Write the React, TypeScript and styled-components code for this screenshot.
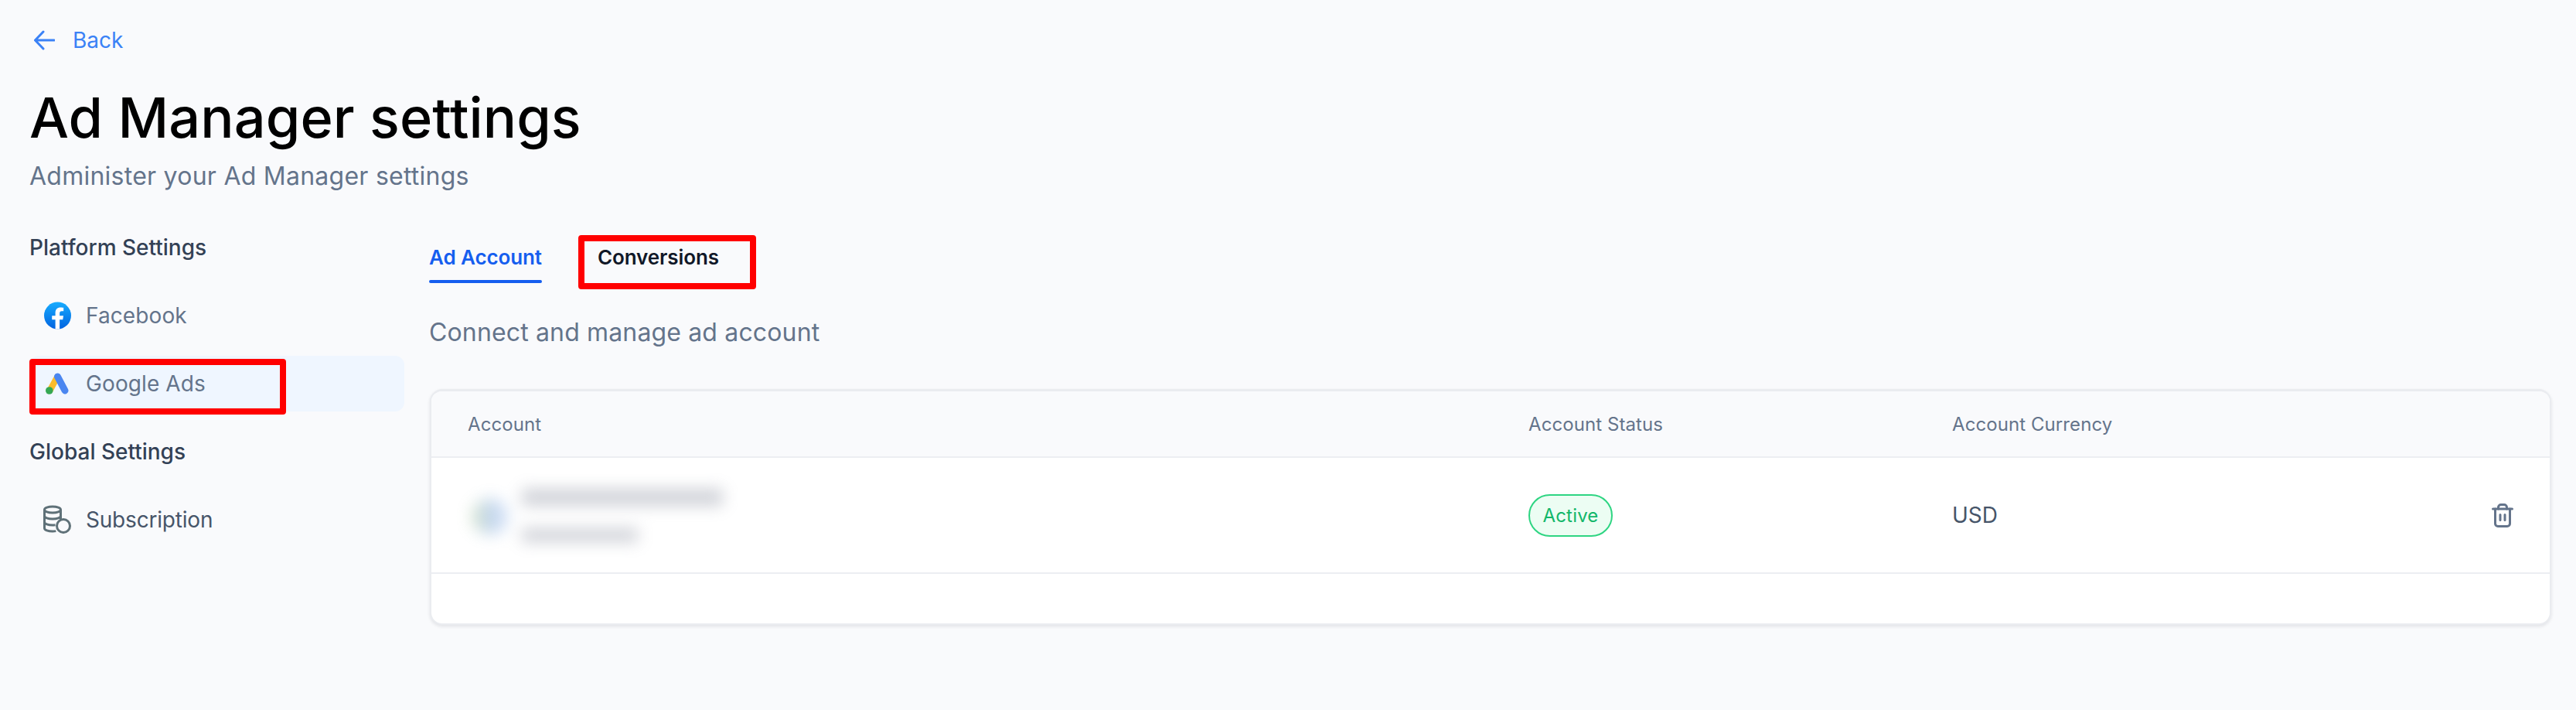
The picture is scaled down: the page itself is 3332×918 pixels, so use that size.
import React from 'react';
import styled, { createGlobalStyle } from 'styled-components';

const GlobalStyle = createGlobalStyle`
  html, body {
    margin: 0;
    padding: 0;
    background: #f9fafc;
    font-family: Inter, "Liberation Sans", sans-serif;
  }
  * {
    box-sizing: border-box;
  }
`;

const Page = styled.div`
  min-height: 918px;
  padding: 32px 32px 0 38px;
  background: #f9fafc;
`;

const BackLink = styled.a`
  display: flex;
  align-items: center;
  gap: 23px;
  height: 40px;
  padding-left: 6px;
  font-size: 28px;
  line-height: 40px;
  color: #3b82f6;
`;

const Title = styled.h1`
  margin: 36px 0 10px;
  font-size: 72px;
  line-height: 88px;
  font-weight: 500;
  letter-spacing: 0.1px;
  color: #000;
`;

const Subtitle = styled.p`
  margin: 0 0 50px;
  font-size: 32px;
  line-height: 44px;
  letter-spacing: 0.25px;
  color: #64748b;
`;

const Columns = styled.div`
  display: flex;
  gap: 32px;
`;

const Sidebar = styled.nav`
  flex: 0 0 485px;
  display: flex;
  flex-direction: column;
`;

const SectionLabel = styled.div<{ $spaced?: boolean }>`
  margin: ${p => (p.$spaced ? '32px' : '0')} 0 32px;
  font-size: 28px;
  line-height: 40px;
  font-weight: 500;
  color: #334155;
`;

const NavList = styled.div`
  display: flex;
  flex-direction: column;
  gap: 16px;
`;

const NavItem = styled.div<{ $active?: boolean; $dark?: boolean }>`
  position: relative;
  display: flex;
  align-items: center;
  height: 72px;
  padding-left: 16px;
  border-radius: 12px;
  font-size: 28px;
  font-weight: 400;
  letter-spacing: ${p => (p.$dark ? '-0.2px' : '0.1px')};
  color: ${p => (p.$dark ? '#475569' : '#64748b')};
  background: ${p => (p.$active ? '#eff6ff' : 'transparent')};
`;

const NavIcon = styled.span`
  flex: 0 0 40px;
  display: flex;
  align-items: center;
  justify-content: center;
  margin-right: 17px;
`;

const Marker = styled.div<{ $left: number; $top: number; $width: number; $height: number }>`
  position: absolute;
  left: ${p => p.$left}px;
  top: ${p => p.$top}px;
  width: ${p => p.$width}px;
  height: ${p => p.$height}px;
  border: 8px solid #ff0000;
  border-radius: 4px;
  pointer-events: none;
`;

const Main = styled.main`
  flex: 1;
  min-width: 0;
`;

const Tabs = styled.div`
  display: flex;
  gap: 72px;
  padding-top: 13px;
`;

const Tab = styled.div<{ $active?: boolean }>`
  position: relative;
  height: 53px;
  font-size: 26px;
  line-height: 40px;
  font-weight: 600;
  letter-spacing: -0.1px;
  color: ${p => (p.$active ? '#155eef' : '#101828')};

  &::after {
    content: '';
    display: ${p => (p.$active ? 'block' : 'none')};
    position: absolute;
    left: 0;
    right: 0;
    bottom: 0;
    height: 4px;
    border-radius: 2px;
    background: #155eef;
  }
`;

const Description = styled.p`
  margin: 42px 0 51px;
  font-size: 32px;
  line-height: 44px;
  letter-spacing: 0.15px;
  color: #64748b;
`;

const Card = styled.section`
  margin-left: 1px;
  border: 2px solid #eaecf0;
  border-top-width: 3px;
  border-radius: 16px;
  background: #fff;
  overflow: hidden;
  box-shadow: 0 2px 4px rgba(16, 24, 40, 0.1);
`;

const Row = styled.div`
  display: grid;
  grid-template-columns: 1372px 548px 1fr 100px;
  align-items: center;
  padding-left: 47px;
`;

const HeadRow = styled(Row)`
  height: 86px;
  background: #f9fafc;
  border-bottom: 2px solid #eceef2;
  font-size: 24px;
  letter-spacing: 0.08px;
  color: #64748b;
`;

const BodyRow = styled(Row)`
  height: 150px;
  border-bottom: 2px solid #eceef2;
  font-size: 28px;
  color: #475569;
`;

const EmptyRow = styled.div`
  height: 64px;
`;

const AccountCell = styled.div`
  display: flex;
  align-items: center;
  gap: 17px;
  padding-left: 5px;
  filter: blur(10px);
  opacity: 0.42;
`;

const AccountAvatar = styled.div`
  width: 48px;
  height: 46px;
  margin-top: 4px;
  border-radius: 50%;
  background: linear-gradient(90deg, #9cc07a 0%, #6f9cdc 55%, #a9c4ec 100%);
`;

const AccountLines = styled.div`
  display: flex;
  flex-direction: column;
  gap: 29px;
`;

const BlurLine = styled.div<{ $width: number; $height: number }>`
  width: ${p => p.$width}px;
  height: ${p => p.$height}px;
  background: #8f94a3;
`;

const StatusBadge = styled.span`
  display: inline-flex;
  align-items: center;
  justify-content: center;
  width: 109px;
  height: 55px;
  border: 2px solid #2ed582;
  border-radius: 28px;
  background: #ecfdf3;
  font-size: 24px;
  font-weight: 400;
  letter-spacing: 0.2px;
  color: #12b76a;
`;

const DeleteCell = styled.div`
  display: flex;
  justify-content: flex-start;
  padding-left: 25px;
  color: #64748b;
`;

const FacebookIcon = () => (
  <svg width="35" height="36" viewBox="0 0 40 40">
    <defs>
      <linearGradient id="fbGradient" x1="0" y1="0" x2="0" y2="1">
        <stop offset="0" stopColor="#18acfe" />
        <stop offset="1" stopColor="#0163e0" />
      </linearGradient>
    </defs>
    <circle cx="20" cy="20" r="20" fill="url(#fbGradient)" />
    <path
      fill="#fff"
      d="M16.7 40V26h-5v-5.8h5v-4.4c0-5 3-7.8 7.6-7.8 2.2 0 4.5.4 4.5.4v4.9h-2.5c-2.5 0-3.3 1.5-3.3 3.1v3.8h5.6l-.9 5.800h-4.700v14z"
    />
  </svg>
);

const GoogleAdsIcon = () => (
  <svg width="30" height="28" viewBox="0 0 30 28">
    <line x1="15" y1="5.5" x2="6" y2="22" stroke="#fbbc2c" strokeWidth="8" strokeLinecap="round" />
    <line x1="15.5" y1="5" x2="25" y2="23" stroke="#4a86f0" strokeWidth="9" strokeLinecap="round" />
    <circle cx="4.8" cy="23" r="4.8" fill="#34a853" />
  </svg>
);

const SubscriptionIcon = () => (
  <svg width="38" height="38" viewBox="0 0 38 38" fill="none" stroke="#5f7178" strokeWidth="3">
    <ellipse cx="13" cy="6" rx="10.5" ry="4" />
    <path d="M2.5 6v24c0 2.2 4.7 4 10.5 4 1.6 0 3-.1 4.3-.4" />
    <path d="M23.5 6v14" />
    <path d="M2.5 14c0 2.2 4.7 4 10.5 4s10.5-1.8 10.5-4" />
    <path d="M2.5 22c0 2.2 4.7 4 10.5 4 1.2 0 2.4-.1 3.5-.2" />
    <circle cx="27" cy="27" r="8.5" />
  </svg>
);

const BackArrow = () => (
  <svg width="27" height="26" viewBox="0 0 27 26" fill="none" stroke="currentColor" strokeWidth="3" strokeLinecap="round" strokeLinejoin="round">
    <path d="M26 13H2M12 2 1.500 13 12 24" />
  </svg>
);

const TrashIcon = () => (
  <svg width="28" height="31" viewBox="0 0 28 31" fill="none" stroke="currentColor" strokeWidth="3" strokeLinecap="round" strokeLinejoin="round">
    <path d="M1.500 7h25" />
    <path d="M8.500 7V5A3.500 3.500 0 0 1 12 1.500h4A3.500 3.500 0 0 1 19.500 5v2" />
    <path d="M4.500 7v19A3.500 3.500 0 0 0 8 29.500h12a3.500 3.500 0 0 0 3.500-3.500V7" />
    <path d="M11 14.500v7M17 14.500v7" />
  </svg>
);

export default function App() {
  return (
    <>
      <GlobalStyle />
      <Page>
        <BackLink>
          <BackArrow />
          Back
        </BackLink>
        <Title>Ad Manager settings</Title>
        <Subtitle>Administer your Ad Manager settings</Subtitle>
        <Columns>
          <Sidebar>
            <SectionLabel>Platform Settings</SectionLabel>
            <NavList>
              <NavItem>
                <NavIcon><FacebookIcon /></NavIcon>
                Facebook
              </NavItem>
              <NavItem $active>
                <NavIcon><GoogleAdsIcon /></NavIcon>
                Google Ads
                <Marker $left={0} $top={4} $width={332} $height={72} />
              </NavItem>
            </NavList>
            <SectionLabel $spaced>Global Settings</SectionLabel>
            <NavList>
              <NavItem $dark>
                <NavIcon><SubscriptionIcon /></NavIcon>
                Subscription
              </NavItem>
            </NavList>
          </Sidebar>
          <Main>
            <Tabs>
              <Tab $active>Ad Account</Tab>
              <Tab>
                Conversions
                <Marker $left={-25} $top={-9} $width={230} $height={70} />
              </Tab>
            </Tabs>
            <Description>Connect and manage ad account</Description>
            <Card>
              <HeadRow>
                <div>Account</div>
                <div>Account Status</div>
                <div>Account Currency</div>
                <div />
              </HeadRow>
              <BodyRow>
                <AccountCell>
                  <AccountAvatar />
                  <AccountLines>
                    <BlurLine $width={260} $height={22} />
                    <BlurLine $width={150} $height={18} />
                  </AccountLines>
                </AccountCell>
                <div><StatusBadge>Active</StatusBadge></div>
                <div>USD</div>
                <DeleteCell><TrashIcon /></DeleteCell>
              </BodyRow>
              <EmptyRow />
            </Card>
          </Main>
        </Columns>
      </Page>
    </>
  );
}
